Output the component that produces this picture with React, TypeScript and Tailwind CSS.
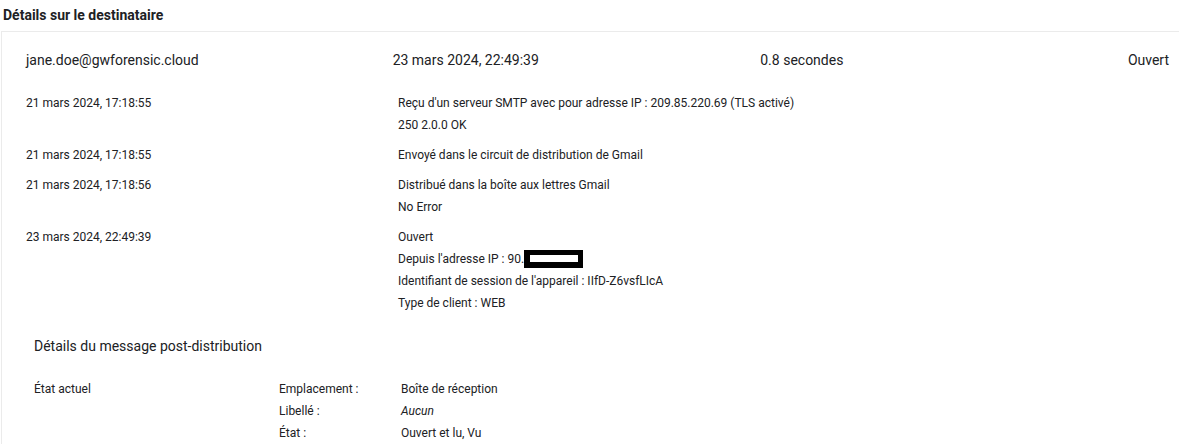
const events: { date: string; lines: React.ReactNode[] }[] = [
  {
    date: '21 mars 2024, 17:18:55',
    lines: ["Reçu d'un serveur SMTP avec pour adresse IP : 209.85.220.69 (TLS activé)", '250 2.0.0 OK'],
  },
  { date: '21 mars 2024, 17:18:55', lines: ['Envoyé dans le circuit de distribution de Gmail'] },
  { date: '21 mars 2024, 17:18:56', lines: ['Distribué dans la boîte aux lettres Gmail', 'No Error'] },
  {
    date: '23 mars 2024, 22:49:39',
    lines: [
      'Ouvert',
      <>
        Depuis l'adresse IP : 90.
        <span className="inline-block align-middle w-[59px] h-[18px] bg-white border-black border-[5px] border-b-[6px] border-l-[6px] -mt-[2px]" />
      </>,
      "Identifiant de session de l'appareil : IIfD-Z6vsfLIcA",
      'Type de client : WEB',
    ],
  },
];

const postRows: { key: string; value: string; italic?: boolean }[] = [
  { key: 'Emplacement :', value: 'Boîte de réception' },
  { key: 'Libellé :', value: 'Aucun', italic: true },
  { key: 'État :', value: 'Ouvert et lu, Vu' },
];

export default function App() {
  return (
    <div className="w-[1179px] h-[448px] overflow-hidden bg-white text-[#202124] font-['Roboto','Liberation_Sans',sans-serif]">
      <div className="h-[31px] flex items-center pl-[3px] text-[14px] font-bold">Détails sur le destinataire</div>
      <div className="ml-px border-t border-l border-[#ebebeb] pl-6 pr-[10px]">
        <div className="flex pt-[18px] text-[14px] leading-[20px]">
          <div className="w-[367px]">jane.doe@gwforensic.cloud</div>
          <div className="w-[368px]">23 mars 2024, 22:49:39</div>
          <div className="w-[368px]">0.8 secondes</div>
          <div className="flex-1 text-right">Ouvert</div>
        </div>

        <div className="mt-[22px] flex flex-col gap-2 text-[12px] leading-[22px]">
          {events.map((ev, i) => (
            <div key={i} className="flex">
              <div className="w-[372px] shrink-0">{ev.date}</div>
              <div className="flex flex-col">
                {ev.lines.map((l, j) => (
                  <div key={j}>{l}</div>
                ))}
              </div>
            </div>
          ))}
        </div>

        <div className="pl-2">
          <div className="mt-[22px] text-[14px] leading-[20px]">Détails du message post-distribution</div>
          <div className="mt-[22px] flex text-[12px] leading-[22px]">
            <div className="w-[245px] shrink-0">État actuel</div>
            <div className="flex flex-col">
              {postRows.map((r) => (
                <div key={r.key} className="flex">
                  <div className="w-[122px] shrink-0">{r.key}</div>
                  <div className={r.italic ? 'italic' : ''}>{r.value}</div>
                </div>
              ))}
            </div>
          </div>
        </div>
      </div>
    </div>
  );
}
